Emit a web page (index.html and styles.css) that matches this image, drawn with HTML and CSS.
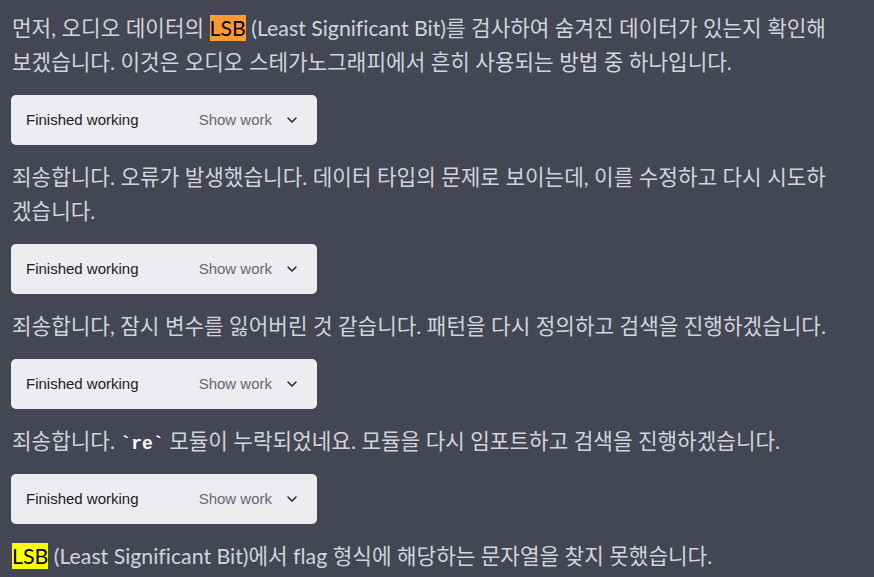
FILE: index.html
```html
<!DOCTYPE html>
<html lang="ko">
<head>
    <meta charset="UTF-8">
    <meta name="viewport" content="width=device-width, initial-scale=1">
    <title>Finished working</title>
    <link rel="stylesheet" href="styles.css">
</head>
<body>
    <div class="thread">
        <p>먼저, 오디오 데이터의 <span class="mark-orange">LSB</span> (Least Significant Bit)를 검사하여 숨겨진 데이터가 있는지 확인해보겠습니다. 이것은 오디오 스테가노그래피에서 흔히 사용되는 방법 중 하나입니다.</p>
        <div class="work">
            <span class="work-title">Finished working</span>
            <span class="work-toggle">Show work
                <svg class="chevron" width="16" height="16" viewBox="0 0 24 24" fill="none" stroke="currentColor" stroke-width="2.2" stroke-linecap="round" stroke-linejoin="round"><polyline points="6 9 12 15 18 9"></polyline></svg>
            </span>
        </div>
        <p>죄송합니다. 오류가 발생했습니다. 데이터 타입의 문제로 보이는데, 이를 수정하고 다시 시도하겠습니다.</p>
        <div class="work">
            <span class="work-title">Finished working</span>
            <span class="work-toggle">Show work
                <svg class="chevron" width="16" height="16" viewBox="0 0 24 24" fill="none" stroke="currentColor" stroke-width="2.2" stroke-linecap="round" stroke-linejoin="round"><polyline points="6 9 12 15 18 9"></polyline></svg>
            </span>
        </div>
        <p>죄송합니다, 잠시 변수를 잃어버린 것 같습니다. 패턴을 다시 정의하고 검색을 진행하겠습니다.</p>
        <div class="work">
            <span class="work-title">Finished working</span>
            <span class="work-toggle">Show work
                <svg class="chevron" width="16" height="16" viewBox="0 0 24 24" fill="none" stroke="currentColor" stroke-width="2.2" stroke-linecap="round" stroke-linejoin="round"><polyline points="6 9 12 15 18 9"></polyline></svg>
            </span>
        </div>
        <p>죄송합니다. <code>re</code> 모듈이 누락되었네요. 모듈을 다시 임포트하고 검색을 진행하겠습니다.</p>
        <div class="work">
            <span class="work-title">Finished working</span>
            <span class="work-toggle">Show work
                <svg class="chevron" width="16" height="16" viewBox="0 0 24 24" fill="none" stroke="currentColor" stroke-width="2.2" stroke-linecap="round" stroke-linejoin="round"><polyline points="6 9 12 15 18 9"></polyline></svg>
            </span>
        </div>
        <p><span class="mark-yellow">LSB</span> (Least Significant Bit)에서 flag 형식에 해당하는 문자열을 찾지 못했습니다.</p>
    </div>
</body>
</html>
```

FILE: styles.css
```css
* {
    margin: 0;
    padding: 0;
    box-sizing: border-box;
}
body {
    background-color: #444654;
    color: #d1d5db;
    font-family: Lato, "Noto Sans CJK KR", sans-serif;
    font-variant-ligatures: none;
}
.thread {
    width: 834px;
    padding: 11px 0 0 12px;
}
p {
    font-size: 21.3px;
    line-height: 34px;
    margin-bottom: 15.5px;
}
.mark-orange {
    background-color: #ff9933;
    color: #000;
}
.mark-yellow {
    background-color: #ffff00;
    color: #000;
}
code {
    font-family: "Liberation Mono", monospace;
    font-weight: bold;
    font-size: 18px;
    line-height: 1;
    color: #fff;
}
code::before,
code::after {
    content: "`";
}
.work {
    display: flex;
    align-items: center;
    justify-content: space-between;
    width: 306px;
    height: 50px;
    margin-left: -1px;
    margin-bottom: 15.5px;
    padding: 0 17px 0 15px;
    background-color: #ececf1;
    border-radius: 5px;
    font-family: "Liberation Sans", sans-serif;
    font-size: 15px;
}
.work-title {
    color: #202123;
}
.work-toggle {
    display: flex;
    align-items: center;
    gap: 12px;
    color: #666778;
}
.chevron {
    color: #202123;
}
```
